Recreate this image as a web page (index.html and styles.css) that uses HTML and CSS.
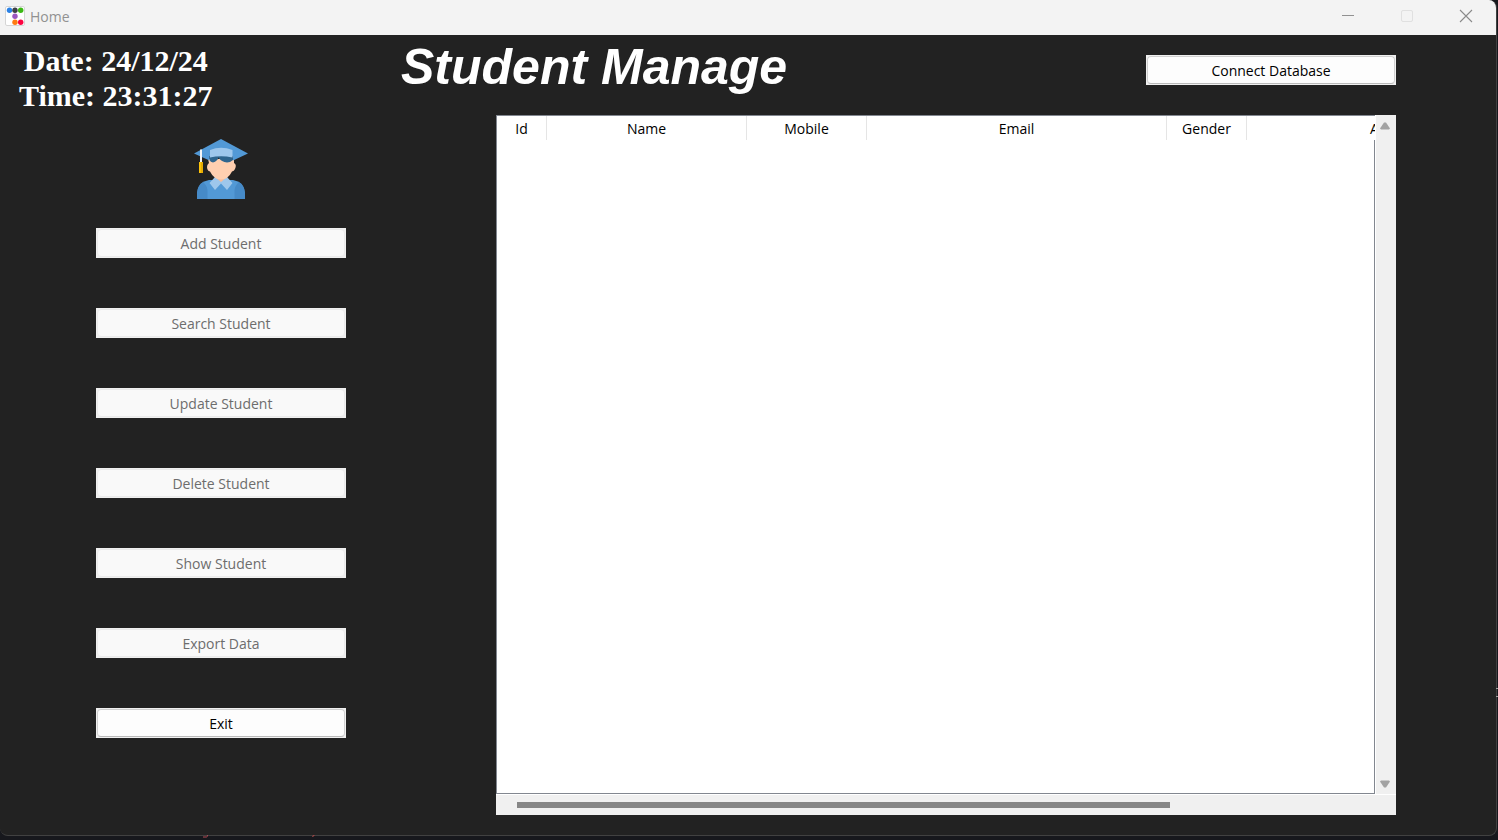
FILE: index.html
```html
<!DOCTYPE html>
<html lang="en">
<head>
<meta charset="utf-8">
<title>Home</title>
<link rel="stylesheet" href="styles.css">
</head>
<body>
<div class="window">
  <header class="titlebar">
    <svg class="app-icon" viewBox="0 0 20 20" aria-hidden="true">
      <rect x="0.5" y="0.5" width="19" height="19" rx="1.5" fill="#fff" stroke="#d5d5d5"/>
      <circle cx="4.5" cy="4.3" r="2.7" fill="#2b82e6"/>
      <circle cx="10" cy="4.3" r="2.7" fill="#3d4045"/>
      <circle cx="15.7" cy="4.3" r="2.7" fill="#3cb815"/>
      <circle cx="10" cy="10.3" r="2.7" fill="#9b55c0"/>
      <circle cx="10" cy="16.3" r="2.7" fill="#ff7a12"/>
      <circle cx="15.7" cy="16.3" r="2.7" fill="#fc0340"/>
    </svg>
    <span class="caption">Home</span>
    <button class="win-btn" type="button" aria-label="Minimize">
      <svg width="12" height="12" viewBox="0 0 12 12"><path d="M0 5.5H12" stroke="#919191" fill="none"/></svg>
    </button>
    <button class="win-btn" type="button" aria-label="Maximize" disabled>
      <svg width="12" height="12" viewBox="0 0 12 12"><rect x="0.5" y="0.5" width="11" height="11" rx="1.5" stroke="#e0e0e0" fill="none"/></svg>
    </button>
    <button class="win-btn" type="button" aria-label="Close">
      <svg width="12" height="12" viewBox="0 0 12 12"><path d="M0 0L12 12M12 0L0 12" stroke="#8a8a8a" stroke-width="1.1" fill="none"/></svg>
    </button>
  </header>

  <div class="top">
    <div class="clock">Date: 24/12/24<br>Time: 23:31:27</div>
    <h1 class="heading">Student Manage</h1>
    <button class="btn" type="button">Connect Database</button>
  </div>

  <div class="main">
    <nav class="menu">
      <svg class="avatar" viewBox="0 0 60 60" role="img" aria-label="Student">
        <path d="M6 60V54Q7 43 18 41L42 41Q53 43 54 54V60Z" fill="#5299d6"/>
        <path d="M6 60V54Q6.500 46 12 43Q17 47 16.500 54V60ZM54 60V54Q53.500 46 48 43Q43 47 43.500 54V60Z" fill="#468ac7"/>
        <path d="M24 34H36V40L30 44L24 40Z" fill="#f8bd9a"/>
        <path d="M24 38L30 43L36 38L41.500 44L36 51L30 44.500L24 51L18.500 44Z" fill="#9ec7ec"/>
        <path d="M17 20H43V24Q46 25.500 44 30Q43 32 41 32.500Q37 40.500 30 40.500Q23 40.500 19 32.500Q17 32 16.300 30Q15.300 26 18 24Z" fill="#ffcfb0"/>
        <path d="M18.500 16H42V21Q39 23.500 36 23.500Q30.500 23 27.500 18.500Q26.500 22 22 23.500Q19.500 23 18.500 21Z" fill="#2f658e"/>
        <path d="M30 0L57 14.500L42 21.500V17H18.500V21.500L3 14.500Z" fill="#5299d6"/>
        <path d="M19 11Q30 6.500 41.500 11V18.500Q30 16 19 18.500Z" fill="#9ec7ec"/>
        <path d="M9 10.500H11V24H9Z" fill="#f3f5f7"/>
        <path d="M8 23H12V34H8Z" fill="#fdc30a"/>
        <path d="M10 23H12V34H10Z" fill="#e6ac05"/>
      </svg>
      <button class="btn" type="button" disabled>Add Student</button>
      <button class="btn" type="button" disabled>Search Student</button>
      <button class="btn" type="button" disabled>Update Student</button>
      <button class="btn" type="button" disabled>Delete Student</button>
      <button class="btn" type="button" disabled>Show Student</button>
      <button class="btn" type="button" disabled>Export Data</button>
      <button class="btn" type="button">Exit</button>
    </nav>

    <section class="records" aria-label="Student records">
      <div class="frame">
        <table class="table">
          <colgroup>
            <col class="c-id"><col class="c-name"><col class="c-mobile"><col class="c-email"><col class="c-gender"><col class="c-address">
          </colgroup>
          <thead>
            <tr><th scope="col">Id</th><th scope="col">Name</th><th scope="col">Mobile</th><th scope="col">Email</th><th scope="col">Gender</th><th scope="col">Address</th></tr>
          </thead>
        </table>
        <div class="rows"></div>
      </div>
      <div class="vscroll">
        <svg width="10" height="8" viewBox="0 0 10 8" aria-hidden="true"><path d="M4 0.500H6L10 6.500L9 7.500H1L0 6.500Z" fill="#a3a3a3"/></svg>
        <svg width="10" height="8" viewBox="0 0 10 8" aria-hidden="true"><path d="M4 7.500H6L10 1.500L9 0.500H1L0 1.500Z" fill="#a3a3a3"/></svg>
      </div>
      <div class="hscroll"><div class="thumb"></div></div>
    </section>
  </div>
</div>
<svg class="speck speck-a" width="5" height="3" viewBox="0 0 5 3" aria-hidden="true"><path d="M0 2H3.500Q4.500 2 4.500 0" fill="none" stroke="#b44a55"/></svg>
<svg class="speck speck-b" width="3" height="2" viewBox="0 0 3 2" aria-hidden="true"><path d="M0 2L1 0H3L1 2Z" fill="#9c4545"/></svg>
<svg class="speck speck-c" width="2" height="10" viewBox="0 0 2 10" aria-hidden="true"><path d="M0 0.500H2M0 8.500H2" stroke="#a0a0a0"/></svg>
</body>
</html>
```
FILE: styles.css
```css
* {
  box-sizing: border-box;
}

body {
  margin: 0;
  min-height: 100vh;
  padding: 0 1px 4px 0;
  display: flex;
  flex-direction: column;
  position: relative;
  background: #17181d;
  color: #000;
  font: 14px/20px "Open Sans", "Noto Sans", sans-serif;
}

button {
  font: inherit;
  color: inherit;
}

.window {
  flex: 1;
  display: flex;
  flex-direction: column;
  overflow: hidden;
  background: #222;
  border: solid #414141;
  border-width: 0 1px 1px 0;
  border-radius: 0 8px 8px 8px;
}

.titlebar {
  display: flex;
  align-items: center;
  height: 35px;
  padding: 0 1px 0 5px;
  background: #f3f3f3;
  color: #919191;
}

.app-icon {
  width: 20px;
  height: 20px;
  margin: 0 5px 3px 0;
}

.caption {
  flex: 1;
  padding-bottom: 2px;
}

.win-btn {
  display: flex;
  align-items: center;
  justify-content: center;
  width: 59px;
  height: 32px;
  margin-bottom: 3px;
  padding: 0;
  border: 0;
  background: transparent;
}

.win-btn svg {
  overflow: visible;
}

.top {
  display: grid;
  grid-template-columns: 382px 1fr 250px;
  height: 80px;
  padding: 0 100px 0 19px;
}

.top .btn {
  margin-top: 20px;
}

.clock {
  justify-self: start;
  padding-top: 8px;
  color: #fff;
  font: bold 30px/35px "Liberation Serif", serif;
  text-align: center;
}

.heading {
  margin: 0;
  color: #fff;
  font: italic bold 50px/64px "Liberation Sans", sans-serif;
  white-space: nowrap;
}

.btn {
  position: relative;
  z-index: 0;
  display: block;
  width: 100%;
  height: 30px;
  padding: 2px 0 0;
  border: 0;
  background: #f0f0f0;
  color: #000;
}

.btn::before {
  content: "";
  position: absolute;
  inset: 1px;
  z-index: -1;
  border: 1px solid #d0d0d0;
  border-bottom-color: #bababa;
  border-radius: 4px;
  background: #fdfdfd;
}

.btn:disabled {
  color: #6d6d6d;
}

.btn:disabled::before {
  border-color: #ebebeb;
  background: #f9f9f9;
}

.main {
  flex: 1;
  display: grid;
  grid-template-columns: 250px 1fr;
  column-gap: 150px;
  padding: 0 100px 20px 96px;
}

.menu {
  display: flex;
  flex-direction: column;
  gap: 50px;
  padding-top: 24px;
}

.avatar {
  width: 60px;
  height: 60px;
  align-self: center;
  margin-bottom: -21px;
}

.records {
  display: grid;
  grid-template: 1fr 20px / minmax(0, 1fr) 20px;
  gap: 1px;
  background: #fff;
}

.frame {
  display: flex;
  flex-direction: column;
  overflow: hidden;
  border: solid #828790;
  border-width: 1px 0 1px 1px;
}

.table {
  width: 1050px;
  table-layout: fixed;
  border-collapse: separate;
  border-spacing: 0;
}

.table th {
  height: 24px;
  padding: 2px 0 0;
  border-right: 1px solid #e5e5e5;
  font-weight: normal;
}

.c-id { width: 50px; }
.c-name { width: 200px; }
.c-mobile { width: 120px; }
.c-email { width: 300px; }
.c-gender { width: 80px; }
.c-address { width: 300px; }

.rows {
  flex: 1;
  border-right: 1px solid #828790;
}

.vscroll {
  display: flex;
  flex-direction: column;
  align-items: center;
  justify-content: space-between;
  padding: 7px 2px 6px 0;
  background: #f0f0f0;
}

.hscroll {
  grid-column: 1 / -1;
  display: flex;
  align-items: center;
  padding: 0 20px 0 21px;
  background: #f0f0f0;
}

.thumb {
  width: 76%;
  height: 6px;
  background: #868686;
}

.speck {
  position: absolute;
}

.speck-a {
  left: 203px;
  bottom: 2px;
}

.speck-b {
  left: 312px;
  bottom: 3px;
}

.speck-c {
  right: 0;
  top: 688px;
}
```
